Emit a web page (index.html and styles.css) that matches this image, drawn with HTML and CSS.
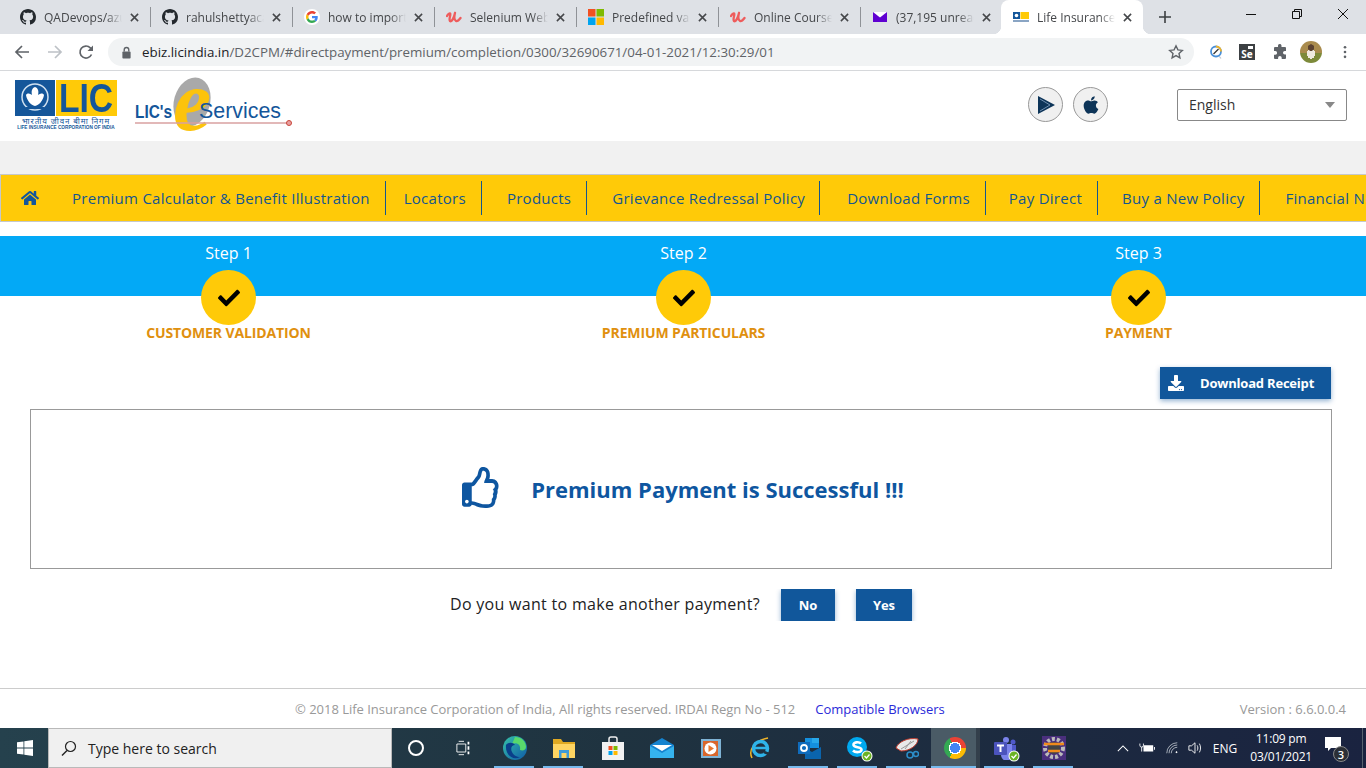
FILE: index.html
```html
<!DOCTYPE html>
<html lang="en">
<head>
    <meta charset="UTF-8">
    <meta name="viewport" content="width=device-width, initial-scale=1.0">
    <title>Life Insurance Corporation of India</title>
    <link rel="stylesheet" href="styles.css">
</head>
<body>
    <svg class="defs" width="0" height="0" aria-hidden="true">
        <symbol id="gh" viewBox="0 0 16 16"><path fill="#24292e" d="M8 0C3.58 0 0 3.58 0 8c0 3.54 2.29 6.53 5.47 7.59.4.07.55-.17.55-.38 0-.19-.01-.82-.01-1.49-2.01.37-2.53-.49-2.69-.94-.09-.23-.48-.94-.82-1.13-.28-.15-.68-.52-.01-.53.63-.01 1.08.58 1.23.82.72 1.21 1.87.87 2.33.66.07-.52.28-.87.51-1.07-1.78-.2-3.64-.89-3.64-3.95 0-.87.31-1.59.82-2.15-.08-.2-.36-1.02.08-2.12 0 0 .67-.21 2.2.82.64-.18 1.32-.27 2-.27.68 0 1.36.09 2 .27 1.53-1.04 2.2-.82 2.2-.82.44 1.1.16 1.92.08 2.12.51.56.82 1.27.82 2.15 0 3.07-1.87 3.75-3.65 3.95.29.25.54.73.54 1.48 0 1.07-.01 1.93-.01 2.2 0 .21.15.46.55.38A8.013 8.013 0 0016 8c0-4.42-3.58-8-8-8z"/></symbol>
        <symbol id="udemy" viewBox="0 0 16 16"><path fill="none" stroke="#ee5c5c" stroke-width="2.300" stroke-linecap="round" stroke-linejoin="round" d="M1 7c1-2 2.500-3 3.200-2.500C5 6 2.500 10 4 12c1.500 1.200 4-3 5-8M9 4c-.8 3-.8 7 1 8 1.500.6 3-1 4.500-3"/></symbol>
        <symbol id="close" viewBox="0 0 10 10"><path fill="none" stroke="#45474a" stroke-width="1.700" d="M1 1l8 8M9 1l-8 8"/></symbol>
        <symbol id="check" viewBox="0 0 512 512"><path fill="#000" d="M173.898 439.404l-166.400-166.400c-9.997-9.997-9.997-26.206 0-36.204l36.203-36.204c9.997-9.998 26.207-9.998 36.204 0L192 312.690 432.095 72.596c9.997-9.997 26.207-9.997 36.204 0l36.203 36.204c9.997 9.997 9.997 26.206 0 36.204l-294.400 294.401c-9.998 9.997-26.207 9.997-36.204-.001z"/></symbol>
        <symbol id="badge-ok" viewBox="0 0 12 12"><circle cx="6" cy="6" r="5.500" fill="#fff"/><circle cx="6" cy="6" r="4.500" fill="#6bb324"/><path fill="none" stroke="#fff" stroke-width="1.300" d="M3.500 6l2 2 3-3.500"/></symbol>
    </svg>

    <!-- browser chrome -->
    <div class="tabstrip">
        <div class="tab">
            <svg class="favicon"><use href="#gh"/></svg>
            <span class="tab-title">QADevops/azure-pipelines</span>
            <svg class="tab-close"><use href="#close"/></svg>
        </div>
        <div class="tab">
            <svg class="favicon"><use href="#gh"/></svg>
            <span class="tab-title">rahulshettyacademy/repo</span>
            <svg class="tab-close"><use href="#close"/></svg>
        </div>
        <div class="tab">
            <svg class="favicon favicon-round" viewBox="-8 -8 64 64">
                <path fill="#EA4335" d="M24 9.500c3.540 0 6.710 1.220 9.210 3.600l6.850-6.850C35.900 2.380 30.470 0 24 0 14.620 0 6.510 5.380 2.560 13.220l7.980 6.190C12.430 13.720 17.740 9.500 24 9.500z"/>
                <path fill="#4285F4" d="M46.980 24.550c0-1.570-.15-3.090-.38-4.550H24v9.020h12.940c-.58 2.960-2.260 5.480-4.780 7.180l7.730 6c4.510-4.180 7.090-10.360 7.090-17.650z"/>
                <path fill="#FBBC05" d="M10.530 28.590c-.48-1.450-.76-2.990-.76-4.590s.27-3.140.76-4.590l-7.980-6.190C.92 16.460 0 20.120 0 24c0 3.880.92 7.540 2.560 10.780l7.970-6.190z"/>
                <path fill="#34A853" d="M24 48c6.480 0 11.930-2.130 15.890-5.810l-7.730-6c-2.150 1.450-4.920 2.300-8.160 2.300-6.260 0-11.570-4.220-13.470-9.910l-7.980 6.190C6.510 42.620 14.620 48 24 48z"/>
            </svg>
            <span class="tab-title">how to import Selenium</span>
            <svg class="tab-close"><use href="#close"/></svg>
        </div>
        <div class="tab">
            <svg class="favicon"><use href="#udemy"/></svg>
            <span class="tab-title">Selenium WebDriver with</span>
            <svg class="tab-close"><use href="#close"/></svg>
        </div>
        <div class="tab">
            <svg class="favicon" viewBox="0 0 16 16">
                <rect width="7.500" height="7.500" fill="#f25022"/><rect x="8.500" width="7.500" height="7.500" fill="#7fba00"/>
                <rect y="8.500" width="7.500" height="7.500" fill="#00a4ef"/><rect x="8.500" y="8.500" width="7.500" height="7.500" fill="#ffb900"/>
            </svg>
            <span class="tab-title">Predefined variables</span>
            <svg class="tab-close"><use href="#close"/></svg>
        </div>
        <div class="tab">
            <svg class="favicon"><use href="#udemy"/></svg>
            <span class="tab-title">Online Courses - Learn</span>
            <svg class="tab-close"><use href="#close"/></svg>
        </div>
        <div class="tab tab-last">
            <svg class="favicon" viewBox="0 0 16 16">
                <rect x="1" y="3" width="14" height="10" fill="#5f01d1"/><path fill="#fff" d="M1 3h14L8 8.500z"/>
            </svg>
            <span class="tab-title">(37,195 unread) - Yahoo</span>
            <svg class="tab-close"><use href="#close"/></svg>
        </div>
        <div class="tab tab-active">
            <svg class="favicon" viewBox="0 0 16 16">
                <rect y="3" width="7" height="7" fill="#14569a"/><circle cx="3.500" cy="6.500" r="1.800" fill="#fff"/>
                <rect x="7.500" y="3" width="8.500" height="7" fill="#ffca08"/>
                <rect y="11" width="16" height="2" fill="#8aa5c4"/>
            </svg>
            <span class="tab-title">Life Insurance Corporation</span>
            <svg class="tab-close"><use href="#close"/></svg>
        </div>
        <svg class="new-tab" viewBox="0 0 12 12"><path fill="none" stroke="#3c4043" stroke-width="1.600" d="M6 0v12M0 6h12"/></svg>
        <div class="window-controls">
            <svg class="win-btn" viewBox="0 0 46 16"><path stroke="#111" d="M18 8.500h10"/></svg>
            <svg class="win-btn" viewBox="0 0 46 16"><path fill="none" stroke="#111" d="M18.500 5.500h7v7h-7zM20.500 5.500v-2h7v7h-2"/></svg>
            <svg class="win-btn" viewBox="0 0 46 16"><path fill="none" stroke="#111" d="M18 3l10 10M28 3L18 13"/></svg>
        </div>
    </div>

    <div class="toolbar">
        <svg class="tool-icon" viewBox="0 0 16 16"><path fill="none" stroke="#5f6368" stroke-width="1.700" d="M15 8H2M8 2L2 8l6 6"/></svg>
        <svg class="tool-icon tool-icon-off" viewBox="0 0 16 16"><path fill="none" stroke="#bdc1c6" stroke-width="1.700" d="M1 8h13M8 2l6 6-6 6"/></svg>
        <svg class="tool-icon tool-icon-reload" viewBox="0 0 16 16"><path fill="none" stroke="#5f6368" stroke-width="1.700" d="M13.500 10.500A6 6 0 1 1 12.300 3.800L14 5.500"/><path fill="#5f6368" d="M15 1.500V7H9.500z"/></svg>
        <div class="omnibox">
            <svg class="lock" viewBox="0 0 12 14"><path fill="none" stroke="#5f6368" stroke-width="1.500" d="M3.500 6V4a2.500 2.500 0 0 1 5 0v2"/><rect x="1.500" y="6" width="9" height="7.500" rx="1" fill="#5f6368"/></svg>
            <span class="url"><span class="url-host">ebiz.licindia.in</span>/D2CPM/#directpayment/premium/completion/0300/32690671/04-01-2021/12:30:29/01</span>
            <svg class="star" viewBox="0 0 16 16"><path fill="none" stroke="#5f6368" stroke-width="1.400" d="M8 1.800l1.900 4.100 4.400.5-3.300 3 .9 4.400L8 11.600l-3.900 2.200.9-4.400-3.300-3 4.400-.5z"/></svg>
        </div>
        <div class="extensions">
            <svg class="ext" viewBox="0 0 16 16"><circle cx="8" cy="7.500" r="5" fill="none" stroke="#4a90d9" stroke-width="1.800"/><path fill="none" stroke="#f0b429" stroke-width="1.800" d="M8 2.500a5 5 0 0 1 5 5"/><path stroke="#333" stroke-width="1.200" d="M5.500 10l5-5"/><path stroke="#b9c4cf" stroke-width="1.200" d="M11 12l2 2.500"/></svg>
            <span class="ext-se">Se</span>
            <svg class="ext" viewBox="0 0 16 16"><path fill="#5f6368" d="M6 1.500a1.800 1.800 0 0 1 3.500 0V3H13a1 1 0 0 1 1 1v3h-1.200a1.800 1.800 0 0 0 0 3.600H14V14a1 1 0 0 1-1 1H9.700v-1.200a1.800 1.800 0 0 0-3.600 0V15H3a1 1 0 0 1-1-1v-3.300h1.300a1.800 1.800 0 0 0 0-3.600H2V4a1 1 0 0 1 1-1h3z"/></svg>
            <span class="avatar"></span>
            <svg class="kebab" viewBox="0 0 4 16"><circle cx="2" cy="2.500" r="1.500" fill="#5f6368"/><circle cx="2" cy="8" r="1.500" fill="#5f6368"/><circle cx="2" cy="13.500" r="1.500" fill="#5f6368"/></svg>
        </div>
    </div>

    <!-- page -->
    <header class="site-header">
        <div class="lic-logo">
            <div class="lic-logo-top">
                <svg class="lic-emblem" viewBox="0 0 40 36">
                    <rect width="40" height="36" fill="#14569a"/>
                    <circle cx="20" cy="17" r="13" fill="none" stroke="#cfe0f0" stroke-width="1.500"/>
                    <path fill="#fff" d="M20 7c3 1 4 4 3 8 3-2 5-2 6 0-1 6-5 10-9 11-4-1-8-5-9-11 1-2 3-2 6 0-1-4 0-7 3-8z"/>
                    <rect x="11" y="27" width="18" height="2" fill="#14569a"/>
                </svg>
                <span class="lic-word"><span class="lic-letters">LIC</span></span>
            </div>
            <span class="lic-hindi">भारतीय जीवन बीमा निगम</span>
            <span class="lic-english">LIFE INSURANCE CORPORATION OF INDIA</span>
        </div>
        <svg class="eservices" viewBox="0 0 160 56">
            <ellipse cx="57" cy="24" rx="18" ry="25" fill="#a9a9a9" transform="rotate(16 57 24)"/>
            <text x="38" y="52" class="es-e">e</text>
            <text x="0" y="40" class="es-lics" textLength="37" lengthAdjust="spacingAndGlyphs">LIC's</text>
            <text x="64" y="40" class="es-services" textLength="82" lengthAdjust="spacingAndGlyphs">Services</text>
            <path stroke="#d9a0a0" stroke-width="1.500" d="M0 45h152"/>
            <circle cx="154" cy="45" r="2.500" fill="#e8a0a0" stroke="#c9453a"/>
        </svg>
        <div class="store-links">
            <span class="store-btn">
                <svg viewBox="0 0 20 20"><path fill="#0d3458" d="M2 1l17 9-17 9z"/><path fill="none" stroke="#6f8fb0" d="M4 4l10 6-10 6"/></svg>
            </span>
            <span class="store-btn">
                <svg viewBox="0 0 384 512"><path fill="#0d3458" d="M318.700 268.700c-.2-36.700 16.400-64.400 50-84.800-18.800-26.900-47.200-41.700-84.700-44.600-35.500-2.800-74.300 20.700-88.500 20.700-15 0-49.400-19.700-76.400-19.700C63.300 141.200 4 184.800 4 273.500q0 39.300 14.400 81.200c12.800 36.700 59 126.700 107.200 125.200 25.200-.6 43-17.900 75.800-17.900 31.800 0 48.300 17.900 76.400 17.900 48.600-.7 90.400-82.500 102.600-119.300-65.200-30.700-61.700-90-61.700-91.900zm-56.600-164.200c27.300-32.400 24.800-61.900 24-72.500-24.100 1.400-52 16.400-67.900 34.900-17.500 19.800-27.800 44.300-25.600 71.900 26.100 2 49.900-11.400 69.500-34.300z"/></svg>
            </span>
        </div>
        <div class="lang-select">
            <span>English</span>
            <span class="caret"></span>
        </div>
    </header>

    <div class="gray-band"></div>

    <nav class="main-nav">
        <a class="nav-home">
            <svg viewBox="0 0 576 512"><path fill="#14569a" d="M280.370 148.260L96 300.110V464a16 16 0 0 0 16 16l112.060-.29a16 16 0 0 0 15.920-16V368a16 16 0 0 1 16-16h64a16 16 0 0 1 16 16v95.640a16 16 0 0 0 16 16.050L464 480a16 16 0 0 0 16-16V300L295.670 148.260a12.190 12.190 0 0 0-15.300 0zM571.600 251.470L488 182.560V44.050a12 12 0 0 0-12-12h-56a12 12 0 0 0-12 12v72.610L318.470 43a48 48 0 0 0-61 0L4.340 251.470a12 12 0 0 0-1.600 16.900l25.500 31A12 12 0 0 0 45.150 301l235.220-193.740a12.190 12.190 0 0 1 15.300 0L530.900 301a12 12 0 0 0 16.900-1.600l25.500-31a12 12 0 0 0-1.700-16.930z"/></svg>
        </a>
        <a class="nav-item">Premium Calculator &amp; Benefit Illustration</a>
        <a class="nav-item">Locators</a>
        <a class="nav-item">Products</a>
        <a class="nav-item">Grievance Redressal Policy</a>
        <a class="nav-item">Download Forms</a>
        <a class="nav-item">Pay Direct</a>
        <a class="nav-item">Buy a New Policy</a>
        <a class="nav-item">Financial Needs</a>
    </nav>

    <section class="steps">
        <div class="step">
            <span class="step-no">Step 1</span>
            <span class="step-dot"><svg><use href="#check"/></svg></span>
            <span class="step-name">CUSTOMER VALIDATION</span>
        </div>
        <div class="step">
            <span class="step-no">Step 2</span>
            <span class="step-dot"><svg><use href="#check"/></svg></span>
            <span class="step-name">PREMIUM PARTICULARS</span>
        </div>
        <div class="step">
            <span class="step-no">Step 3</span>
            <span class="step-dot"><svg><use href="#check"/></svg></span>
            <span class="step-name">PAYMENT</span>
        </div>
    </section>

    <main class="result">
        <div class="receipt-row">
            <button class="btn btn-receipt">
                <svg viewBox="0 0 512 512"><path fill="#fff" d="M216 0h80c13.300 0 24 10.700 24 24v168h87.700c17.800 0 26.700 21.500 14.100 34.100L269.700 378.300c-7.500 7.500-19.800 7.500-27.300 0L90.100 226.100c-12.600-12.600-3.700-34.100 14.100-34.100H192V24c0-13.300 10.700-24 24-24zm296 376v112c0 13.300-10.700 24-24 24H24c-13.300 0-24-10.700-24-24V376c0-13.300 10.700-24 24-24h146.700l49 49c20.100 20.100 52.500 20.100 72.600 0l49-49H488c13.300 0 24 10.700 24 24zm-124 88c0-11-9-20-20-20s-20 9-20 20 9 20 20 20 20-9 20-20zm64 0c0-11-9-20-20-20s-20 9-20 20 9 20 20 20 20-9 20-20z"/></svg>
                Download Receipt
            </button>
        </div>
        <div class="success-box">
            <svg class="thumb" viewBox="0 0 512 512" preserveAspectRatio="none"><path fill="#0e56a0" d="M466.270 286.690C475.040 271.840 480 256 480 236.850c0-44.015-37.218-85.580-85.820-85.580H357.700c4.920-12.810 8.850-28.130 8.850-46.540C366.550 31.936 328.860 0 271.280 0c-61.607 0-58.093 94.933-71.760 108.600-22.747 22.747-49.615 66.447-68.760 83.400H32c-17.673 0-32 14.327-32 32v240c0 17.673 14.327 32 32 32h64c14.893 0 27.408-10.174 30.978-23.950 44.509 1.001 75.060 39.940 177.802 39.940 7.220 0 15.220.01 22.220.01 77.117 0 111.986-39.423 112.940-95.330 13.319-18.425 20.299-43.122 17.340-66.990 9.854-18.452 13.664-40.343 8.990-62.990zm-61.750 53.830c12.560 21.130 1.260 49.410-13.940 57.570 7.700 48.780-17.608 65.900-53.120 65.900h-37.820c-71.639 0-118.029-37.820-171.640-37.820V240h10.920c28.360 0 67.980-70.890 94.540-97.460 28.360-28.360 18.910-75.630 37.820-94.540 47.270 0 47.270 32.980 47.270 56.730 0 39.170-28.360 56.720-28.360 94.540h103.990c21.110 0 37.730 18.910 37.820 37.820.09 18.900-12.820 37.810-28.360 37.820 22.410 24.200 10.610 51.480-.83 63.610zM88 432c0 13.255-10.745 24-24 24s-24-10.745-24-24 10.745-24 24-24 24 10.745 24 24z"/></svg>
            <span class="success-text">Premium Payment is Successful !!!</span>
        </div>
        <div class="again-row">
            <span class="again-text">Do you want to make another payment?</span>
            <button class="btn btn-no">No</button>
            <button class="btn btn-yes">Yes</button>
        </div>
    </main>

    <footer class="site-footer">
        <span class="copyright">© 2018 Life Insurance Corporation of India, All rights reserved. IRDAI Regn No - 512</span>
        <a class="compat">Compatible Browsers</a>
        <span class="version">Version : 6.6.0.0.4</span>
    </footer>

    <!-- windows taskbar -->
    <div class="taskbar">
        <div class="start">
            <svg viewBox="0 0 16 16"><path fill="#fff" d="M0 2.300l6.500-.9v6.200H0zM7.300 1.300L16 0v7.600H7.300zM0 8.400h6.500v6.200L0 13.700zM7.300 8.400H16V16l-8.700-1.200z"/></svg>
        </div>
        <div class="search-box">
            <svg viewBox="0 0 16 16"><circle cx="9.500" cy="6.500" r="5" fill="none" stroke="#222" stroke-width="1.200"/><path stroke="#222" stroke-width="1.400" d="M6 10.500L1 15.500"/></svg>
            <span>Type here to search</span>
        </div>
        <div class="task-slot task-cortana"><span class="cortana"></span></div>
        <div class="task-slot task-view">
            <svg viewBox="0 0 18 16"><path fill="none" stroke="#fff" d="M1 3.500h10v9H1zM3 .5h6M3 15.500h6"/><path stroke="#fff" stroke-width="2" d="M14 1v3M14 6v4M14 12v3"/></svg>
        </div>
        <div class="task-slot task-run">
            <svg viewBox="0 0 24 24"><defs><linearGradient id="edgeg" x1="0" y1="0" x2="1" y2="1"><stop offset="0" stop-color="#36c2a8"/><stop offset="1" stop-color="#0f5aa8"/></linearGradient></defs><circle cx="12" cy="12" r="12" fill="url(#edgeg)"/><path fill="#59d96c" d="M12 1c6 0 11 4 11 10 0 3-3 4-6 3 1-5-3-8-8-6z"/><path fill="#0a3f8a" d="M3 9c2-3 7-3 9 0-3 0-5 3-3 7 1 3 5 5 8 5-7 4-15-2-14-12z"/></svg>
        </div>
        <div class="task-slot task-run">
            <svg viewBox="0 0 24 24"><path fill="#e0a922" d="M1 3h8l2 3h12v3H1z"/><path fill="#ffd562" d="M1 8h22v14H1z"/><path fill="#3f9bd8" d="M7 14h10v8h-2.500v-5h-5v5H7z"/></svg>
        </div>
        <div class="task-slot">
            <svg viewBox="0 0 24 24"><path fill="none" stroke="#eee" stroke-width="1.500" d="M8 7V3a2 2 0 0 1 2-2h4a2 2 0 0 1 2 2v4"/><path fill="#f2f2f2" d="M1 6h22v18H1z"/><rect x="7.500" y="10" width="4" height="4" fill="#f25022"/><rect x="12.500" y="10" width="4" height="4" fill="#7fba00"/><rect x="7.500" y="15" width="4" height="4" fill="#00a4ef"/><rect x="12.500" y="15" width="4" height="4" fill="#ffb900"/></svg>
        </div>
        <div class="task-slot">
            <svg viewBox="0 0 24 24"><path fill="#1583cf" d="M12 2l12 7v13H0V9z"/><path fill="#fff" d="M2 9h20L12 15z"/><path fill="#35b3ee" d="M0 10l12 7 12-7v12H0z"/></svg>
        </div>
        <div class="task-slot">
            <svg viewBox="0 0 24 24"><rect x="2" y="3" width="20" height="19" fill="#7fb3d5"/><rect x="4" y="5" width="15" height="15" fill="#d9662b"/><circle cx="11.500" cy="12.500" r="6" fill="#fff"/><path fill="#e8772e" d="M9.500 9l5.500 3.500-5.500 3.500z"/></svg>
        </div>
        <div class="task-slot">
            <svg viewBox="0 0 24 24"><path fill="none" stroke="#f0b429" stroke-width="1.500" d="M4 22C0 14 6 5 20 2"/><circle cx="12.500" cy="12.500" r="7" fill="none" stroke="#2fb4e9" stroke-width="3.500"/><path stroke="#2fb4e9" stroke-width="2.500" d="M7 12h12"/><path stroke="#1f3340" stroke-width="2.500" d="M16 16l5 2"/></svg>
        </div>
        <div class="task-slot task-run">
            <svg viewBox="0 0 24 24"><path fill="#1490df" d="M8 2h14v10H8z"/><path fill="#28a8ea" d="M15 2h7v5h-7z"/><path fill="#0a64ad" d="M8 12l7 4 9-5v12H8z"/><rect x="1" y="6" width="12" height="12" fill="#0f6cbd"/><circle cx="7" cy="12" r="3" fill="none" stroke="#fff" stroke-width="1.800"/></svg>
        </div>
        <div class="task-slot task-run">
            <svg viewBox="0 0 24 24"><circle cx="11" cy="11" r="10" fill="#00a9f0"/><path fill="none" stroke="#fff" stroke-width="2.600" d="M15 7.500C13 5.500 7 6 7.500 9c.5 3 7.500 1.500 8 4.500.5 3-6 3.500-8.500 1"/></svg>
            <svg class="task-badge"><use href="#badge-ok"/></svg>
        </div>
        <div class="task-slot task-run">
            <svg viewBox="0 0 24 24"><path fill="#e9e9e9" stroke="#c0392b" d="M1 12C3 6 13 1 23 3c0 6-8 12-17 12z"/><path stroke="#999" d="M6 13L19 5M10 13l6-8"/><circle cx="15" cy="19" r="3" fill="none" stroke="#2c8ec9" stroke-width="1.500"/><circle cx="21" cy="18" r="2.500" fill="none" stroke="#2c8ec9" stroke-width="1.500"/></svg>
        </div>
        <div class="task-slot task-run task-active"><span class="chrome-logo"></span></div>
        <div class="task-slot task-run">
            <svg viewBox="0 0 24 24"><circle cx="13" cy="4" r="3" fill="#7b83eb"/><circle cx="20" cy="6" r="2.500" fill="#5059c9"/><path fill="#5059c9" d="M15 9h8v9a4 4 0 0 1-8 0z"/><path fill="#7b83eb" d="M8 8h11v11a5 5 0 0 1-11 0z"/><rect x="1" y="6" width="13" height="13" rx="1" fill="#4b53bc"/><path stroke="#fff" stroke-width="2" d="M4 9.500h7M7.500 9.500V16"/></svg>
            <svg class="task-badge"><use href="#badge-ok"/></svg>
        </div>
        <div class="task-slot task-run">
            <svg viewBox="0 0 24 24"><rect width="24" height="24" fill="#4a2f7d"/><circle cx="12" cy="12" r="9" fill="none" stroke="#bbb" stroke-width="4" stroke-dasharray="3 2"/><circle cx="12" cy="12" r="6" fill="#444"/><path stroke="#f08a1c" stroke-width="2.500" d="M2 8h20M6 15h12"/></svg>
        </div>
        <div class="tray">
            <svg class="tray-caret" viewBox="0 0 14 8"><path fill="none" stroke="#fff" stroke-width="1.200" d="M1 7l6-6 6 6"/></svg>
            <svg class="tray-battery" viewBox="0 0 18 12"><path fill="#fff" d="M5 3h11v7H5zM17 5h1v3h-1z"/><path fill="none" stroke="#fff" d="M1 1v2a2 2 0 0 0 4 0V1M3 5v5"/></svg>
            <svg class="tray-wifi" viewBox="0 0 16 16"><g fill="none" stroke="#cfd6dc"><path d="M1 15A14 14 0 0 1 15 1"/><path d="M4 15A11 11 0 0 1 15 4"/><path d="M7 15A8 8 0 0 1 15 7"/></g><path fill="#fff" d="M14 12l1.500 1.500L14 15l-1.500-1.500z"/></svg>
            <svg class="tray-vol" viewBox="0 0 16 16"><path fill="none" stroke="#fff" d="M1 5.500h3L8 2v12l-4-3.500H1zM10.500 5c1 2 1 4 0 6M13 3c1.800 3 1.800 7 0 10"/></svg>
            <span class="tray-lang">ENG</span>
            <div class="tray-clock"><span>11:09 pm</span><span>03/01/2021</span></div>
            <div class="notif">
                <svg viewBox="0 0 16 14"><path fill="#fff" d="M0 0h16v11H6l-3 3v-3H0z"/></svg>
                <span class="notif-count">3</span>
            </div>
        </div>
    </div>
</body>
</html>
```

FILE: styles.css
```css
* {
    box-sizing: border-box;
}

body {
    margin: 0;
    width: 1366px;
    height: 768px;
    overflow: hidden;
    display: flex;
    flex-direction: column;
    font-family: "Open Sans", sans-serif;
    background-color: #fff;
}

.defs {
    position: absolute;
}

/* browser tabs */
.tabstrip {
    height: 34px;
    flex: none;
    display: flex;
    align-items: center;
    padding-left: 8px;
    background-color: #dee1e6;
}

.tab {
    position: relative;
    width: 142px;
    height: 34px;
    flex: none;
    display: flex;
    align-items: center;
    padding-left: 12px;
}

.tab::after {
    content: "";
    position: absolute;
    right: -1px;
    top: 7px;
    height: 20px;
    width: 1px;
    background-color: #8f9297;
}

.tab-last::after {
    display: none;
}

.tab-active {
    margin-left: -1px;
    background-color: #fff;
    border-radius: 8px 8px 0 0;
}

/* the little flared corners at the foot of the active tab */
.tab-active::before,
.tab-active::after {
    content: "";
    position: absolute;
    top: auto;
    bottom: 0;
    width: 8px;
    height: 8px;
    background: radial-gradient(circle at 0 0, transparent 8px, #fff 8.5px);
}

.tab-active::before {
    left: -8px;
}

.tab-active::after {
    right: -8px;
    background: radial-gradient(circle at 100% 0, transparent 8px, #fff 8.5px);
}

.favicon {
    width: 16px;
    height: 16px;
    flex: none;
}

.favicon-round {
    background-color: #fff;
    border-radius: 50%;
}

.tab-title {
    width: 78px;
    margin-left: 8px;
    font-size: 12px;
    color: #45474a;
    white-space: nowrap;
    overflow: hidden;
    -webkit-mask-image: linear-gradient(to right, #000 80%, transparent);
    mask-image: linear-gradient(to right, #000 80%, transparent);
}

.tab-close {
    width: 9px;
    height: 9px;
    margin-left: 8px;
    flex: none;
}

.new-tab {
    width: 12px;
    height: 12px;
    margin-left: 16px;
}

.window-controls {
    margin-left: auto;
    display: flex;
    align-self: flex-start;
    padding-top: 6px;
}

.win-btn {
    width: 46px;
    height: 16px;
}

/* address bar */
.toolbar {
    height: 37px;
    flex: none;
    display: flex;
    align-items: center;
    padding-left: 14px;
    background-color: #fff;
    border-bottom: 1px solid #d6d8db;
}

.tool-icon {
    width: 16px;
    height: 16px;
    margin-right: 17px;
}

.tool-icon-off {
    margin-right: 15px;
}

.tool-icon-reload {
    margin-right: 16px;
}

.omnibox {
    width: 1086px;
    height: 28px;
    margin-left: -2px;
    display: flex;
    align-items: center;
    padding: 0 10px 0 13px;
    background-color: #f1f3f4;
    border-radius: 14px;
}

.lock {
    width: 11px;
    height: 13px;
}

.url {
    margin-left: 10px;
    font-size: 13.33px;
    color: #5f6368;
}

.url-host {
    color: #202124;
}

.star {
    width: 16px;
    height: 16px;
    margin-left: auto;
}

.extensions {
    display: flex;
    align-items: center;
    margin-left: 14px;
}

.ext {
    width: 16px;
    height: 16px;
}

.ext-se {
    position: relative;
    width: 16px;
    height: 16px;
    margin: 0 17px 0 15px;
    padding-top: 4px;
    font-size: 10px;
    font-weight: 700;
    line-height: 13px;
    text-align: center;
    color: #fff;
    background-color: #3c4043;
}

.ext-se::after {
    content: "";
    position: absolute;
    top: 2px;
    right: 2px;
    width: 5px;
    height: 3px;
    background-color: #fff;
}

.avatar {
    width: 22px;
    height: 22px;
    margin-left: 12px;
    border-radius: 50%;
    background:
        radial-gradient(circle at 50% 30%, #5b4230 0 3px, transparent 3.5px),
        radial-gradient(ellipse 4px 5px at 50% 58%, #efeae0 0 100%, transparent 100%),
        linear-gradient(#a98b4d 0 55%, #7d8a3a 55%);
}

.kebab {
    width: 4px;
    height: 14px;
    margin-left: 21px;
}

/* lic header */
.site-header {
    height: 70px;
    flex: none;
    display: flex;
    align-items: center;
    padding: 0 0 3px 15px;
}

.lic-logo {
    width: 102px;
    height: 50px;
    display: flex;
    flex-direction: column;
    align-items: stretch;
}

.lic-logo-top {
    display: flex;
    gap: 1px;
    height: 36px;
    flex: none;
}

.lic-emblem {
    width: 40px;
    height: 36px;
}

.lic-word {
    flex: 1;
    display: flex;
    justify-content: center;
    overflow: hidden;
    font-family: "Liberation Sans", sans-serif;
    font-size: 41px;
    font-weight: 700;
    line-height: 37px;
    color: #14569a;
    background-color: #ffca08;
}

.lic-letters {
    display: block;
    transform: scaleX(0.82);
}

.lic-hindi {
    margin-top: 1px;
    height: 8px;
    overflow: hidden;
    font-family: "Noto Sans", sans-serif;
    font-size: 8px;
    line-height: 8px;
    letter-spacing: 0.9px;
    text-align: center;
    color: #14569a;
    white-space: nowrap;
}

.lic-english {
    height: 5px;
    font-family: "Liberation Sans", sans-serif;
    font-size: 4.7px;
    font-weight: 700;
    line-height: 5px;
    text-align: center;
    color: #14569a;
    white-space: nowrap;
}

.eservices {
    width: 160px;
    height: 56px;
    margin: 2px 0 0 18px;
    overflow: visible;
}

.es-e {
    font-family: "Liberation Serif", serif;
    font-size: 86px;
    font-style: italic;
    font-weight: 700;
    fill: #fcc30c;
}

.es-lics {
    font-family: "Liberation Sans", sans-serif;
    font-size: 19px;
    font-weight: 700;
    fill: #14569a;
}

.es-services {
    font-family: "Liberation Sans", sans-serif;
    font-size: 22px;
    fill: #14569a;
}

.store-links {
    display: flex;
    gap: 10px;
    margin-left: 733px;
}

.store-btn {
    width: 35px;
    height: 35px;
    display: flex;
    align-items: center;
    justify-content: center;
    background-color: #f0f0f0;
    border: 1px solid #999;
    border-radius: 50%;
}

.store-btn svg {
    width: 20px;
    height: 20px;
}

.lang-select {
    width: 170px;
    height: 32px;
    margin-left: 69px;
    display: flex;
    align-items: center;
    justify-content: space-between;
    padding: 0 11px;
    font-size: 14px;
    color: #333;
    background-color: #fff;
    border: 1px solid #888;
    border-radius: 2px;
}

.caret {
    width: 0;
    height: 0;
    border-left: 5px solid transparent;
    border-right: 5px solid transparent;
    border-top: 6px solid #888;
}

.gray-band {
    height: 33px;
    flex: none;
    background-color: #f1f1f1;
}

/* main menu */
.main-nav {
    height: 48px;
    flex: none;
    display: flex;
    align-items: center;
    overflow: hidden;
    white-space: nowrap;
    background-color: #ffca08;
    border: 1px solid #c5c8cc;
    border-right: none;
}

.nav-home {
    width: 71px;
    flex: none;
    padding-left: 20px;
    display: flex;
}

.nav-home svg {
    width: 18px;
    height: 16px;
}

.nav-item {
    flex: none;
    height: 34px;
    display: flex;
    align-items: center;
    padding: 0 15px 0 18px;
    font-size: 15px;
    font-weight: 500;
    letter-spacing: 0.27px;
    color: #14568f;
    border-right: 1px solid #14568f;
}

.nav-item:nth-child(2) {
    padding-left: 0;
}

.nav-item:nth-child(4) {
    padding-left: 25px;
}

.nav-item:nth-child(5) {
    padding: 0 14px 0 25px;
}

.nav-item:nth-child(6) {
    padding-left: 27px;
}

.nav-item:nth-child(7) {
    padding-left: 23px;
}

.nav-item:nth-child(8) {
    padding-left: 24px;
}

.nav-item:nth-child(9) {
    padding-left: 25px;
    border-right: none;
}

/* wizard steps */
.steps {
    margin-top: 14px;
    flex: none;
    display: grid;
    grid-template-columns: repeat(3, 455px);
    padding-left: 1px;
    background: linear-gradient(#03a9f6 60px, #fff 60px);
}

.step {
    display: flex;
    flex-direction: column;
    align-items: center;
}

.step-no {
    height: 34px;
    padding-top: 5px;
    font-size: 16px;
    line-height: 24px;
    color: #fff;
}

.step-dot {
    width: 55px;
    height: 55px;
    display: flex;
    align-items: center;
    justify-content: center;
    background-color: #ffca08;
    border-radius: 50%;
}

.step-dot svg {
    width: 22px;
    height: 22px;
}

.step-name {
    font-size: 14px;
    font-weight: 700;
    line-height: 16px;
    letter-spacing: -0.12px;
    color: #e0900f;
}

/* result panel */
.result {
    flex: 1;
    padding: 26px 34px 0 30px;
}

.receipt-row {
    display: flex;
    justify-content: flex-end;
}

.btn {
    border: none;
    font-family: "Open Sans", sans-serif;
    font-size: 13px;
    font-weight: 700;
    letter-spacing: -0.2px;
    color: #fff;
    background-color: #11579b;
    box-shadow: 0 2px 5px rgba(17, 87, 155, 0.45);
}

.btn-receipt {
    width: 171px;
    height: 32px;
    margin-right: 1px;
    display: flex;
    align-items: center;
    padding: 0 0 0 8px;
}

.btn-receipt svg {
    width: 16px;
    height: 16px;
    margin-right: 16px;
}

.success-box {
    height: 160px;
    margin-top: 10px;
    display: flex;
    align-items: center;
    justify-content: center;
    gap: 30px;
    padding-left: 4px;
    border: 1px solid #999;
}

.thumb {
    width: 39px;
    height: 41px;
    margin-bottom: 4px;
}

.success-text {
    font-size: 22px;
    font-weight: 700;
    color: #0e56a0;
}

.again-row {
    height: 32px;
    margin-top: 20px;
    display: flex;
    align-items: center;
    overflow: hidden;
    padding: 0 6px 0 420px;
}

.again-text {
    margin-bottom: 2px;
    font-size: 16px;
    letter-spacing: 0.3px;
    color: #222;
}

.btn-no,
.btn-yes {
    height: 32px;
}

.btn-no {
    width: 54px;
    margin-left: 21px;
}

.btn-yes {
    width: 56px;
    margin-left: 21px;
}

/* footer */
.site-footer {
    height: 40px;
    flex: none;
    display: flex;
    align-items: center;
    padding: 0 20px 0 295px;
    font-size: 13px;
    letter-spacing: -0.015px;
    color: #999;
    border-top: 1px solid #ccc;
}

.compat {
    margin-left: 20px;
    color: #2a2ad8;
}

.version {
    margin-left: auto;
}

/* taskbar */
.taskbar {
    height: 40px;
    flex: none;
    display: flex;
    align-items: center;
    background: linear-gradient(to right, #25414d, #1f3340 45%, #1a2340);
}

.start {
    width: 48px;
    display: flex;
    justify-content: center;
    padding-left: 1px;
}

.start svg {
    width: 16px;
    height: 16px;
}

.search-box {
    width: 344px;
    height: 40px;
    flex: none;
    display: flex;
    align-items: center;
    padding-left: 12px;
    font-size: 14px;
    color: #222;
    background-color: #f0f0f0;
    border: 1px solid #b9b9b9;
}

.search-box svg {
    width: 16px;
    height: 16px;
    margin-right: 11px;
}

.task-slot {
    position: relative;
    width: 49px;
    height: 40px;
    flex: none;
    display: flex;
    align-items: center;
    justify-content: center;
}

.task-slot > svg {
    width: 24px;
    height: 24px;
}

.task-cortana {
    width: 48px;
}

.task-view {
    width: 46px;
    margin-right: 4px;
    padding-left: 2px;
}

.task-view > svg {
    width: 16px;
    height: 16px;
}

.cortana {
    width: 16px;
    height: 16px;
    border: 2.5px solid #fff;
    border-radius: 50%;
}

.task-run::after {
    content: "";
    position: absolute;
    left: 4px;
    right: 5px;
    bottom: 0;
    height: 2px;
    background-color: #76b9ed;
}

.task-active {
    background: linear-gradient(to right, #4a5b66 45px, #333f4b 45px);
}

.task-active::after {
    left: 0;
    right: 4px;
}

.task-slot > .task-badge {
    position: absolute;
    right: 9px;
    bottom: 6px;
    width: 12px;
    height: 12px;
}

.chrome-logo {
    width: 22px;
    height: 22px;
    margin-right: 1px;
    border-radius: 50%;
    background:
        radial-gradient(circle, #4285f4 0 5px, #fff 5px 6.5px, transparent 6.5px),
        conic-gradient(from -30deg, #ea4335 0 120deg, #fbbc05 120deg 240deg, #34a853 240deg);
}

.tray {
    margin-left: auto;
    margin-right: 3px;
    display: flex;
    align-items: center;
    height: 40px;
    color: #fff;
    border-right: 1px solid #56626e;
}

.tray-caret {
    width: 12px;
    height: 7px;
    margin-right: 10px;
}

.tray-battery {
    width: 16px;
    height: 12px;
    margin-right: 11px;
}

.tray-wifi {
    width: 12px;
    height: 12px;
    margin-right: 9px;
}

.tray-vol {
    width: 16px;
    height: 14px;
    margin-right: 10px;
}

.tray-lang {
    font-size: 12px;
    margin-right: 13px;
}

.tray-clock {
    display: flex;
    flex-direction: column;
    align-items: center;
    font-size: 12px;
    line-height: 18px;
    letter-spacing: -0.2px;
}

.notif {
    position: relative;
    width: 24px;
    height: 28px;
    margin: 0 13px 0 13px;
}

.notif svg {
    width: 16px;
    height: 14px;
    margin-top: 3px;
    display: block;
}

.notif-count {
    position: absolute;
    right: 0;
    bottom: 0;
    width: 16px;
    height: 16px;
    font-size: 11px;
    font-weight: 600;
    line-height: 15px;
    text-align: center;
    background-color: #2b2f36;
    border: 1px solid #888;
    border-radius: 50%;
}
```
